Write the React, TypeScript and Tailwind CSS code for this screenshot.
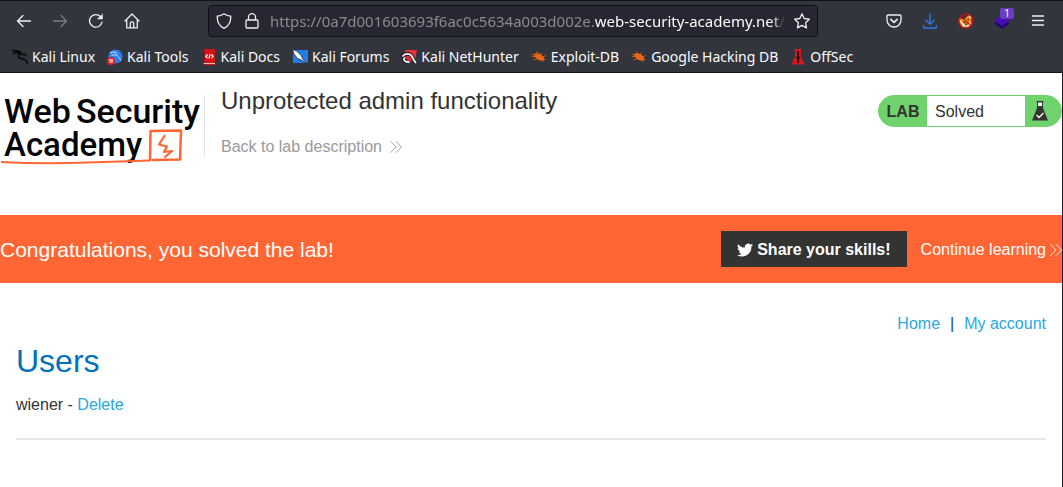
import type { ReactNode } from "react";

function ToolButton({ label, dim, children }: { label: string; dim?: boolean; children: ReactNode }) {
  return (
    <button
      type="button"
      aria-label={label}
      className={"relative flex h-8 w-9 items-center justify-center " + (dim ? "text-[#7b7c81]" : "text-[#f0f0f2]")}
    >
      {children}
    </button>
  );
}

function Line({ children, size = 16 }: { children: ReactNode; size?: number }) {
  return (
    <svg width={size} height={size} viewBox="0 0 16 16" fill="none" stroke="currentColor" strokeWidth="1.3" strokeLinecap="round" strokeLinejoin="round" className="shrink-0">
      {children}
    </svg>
  );
}

function Chevrons() {
  return (
    <svg width="12" height="12" viewBox="0 0 12 12" fill="none" stroke="currentColor" strokeWidth="0.9" className="shrink-0">
      <path d="M.5.3 6 6 .5 11.7M6 .3 11.5 6 6 11.7" />
    </svg>
  );
}

function Beetle() {
  return (
    <svg width="16" height="16" viewBox="0 0 16 16" className="shrink-0">
      <path d="M3 5C6 3.200 10 4.400 12.500 8c1.500 2.600 0 4.200-3 3.600C6.500 11.200 3.500 8.600 3 5Z" fill="#ee6414" />
      <path d="M1 7.500h4M2.500 11l4-1.500M5.500 2.500 7 5M10 3.500V6M15 6.500 11.500 8M14.500 10.500h-3M12.500 13 11 11M0.500 5 3.500 6" stroke="#ee6414" strokeWidth="0.8" />
    </svg>
  );
}

const bookmarks: { name: string; icon: ReactNode }[] = [
  {
    name: "Kali Linux",
    icon: (
      <svg width="16" height="16" viewBox="0 0 16 16" className="shrink-0">
        <path d="M0 1.500C4 1.300 7.500 2 9.500 4M1 4.500C4 3 7 3.400 9 4.600M9 3.500C5 5.500 5.500 9 9 9.500c3.500.5 6 1.500 6.500 5.500M8.500 5.500 13 5.200l1.500 1.600" fill="none" stroke="#050505" strokeWidth="1.500" />
      </svg>
    ),
  },
  {
    name: "Kali Tools",
    icon: (
      <svg width="16" height="16" viewBox="0 0 16 16" className="shrink-0">
        <circle cx="8.500" cy="7.500" r="7" fill="#2a7cf0" />
        <path d="M3 4c3-1.500 6-1 7.500 1M4.500 6.500c3-1.500 5-.5 6.500 1s2 2 2.500 4" fill="none" stroke="#dbeaff" strokeWidth="1" />
        <circle cx="4" cy="12" r="4" fill="#e02424" />
        <path d="M2 10.800h4M3.200 11v3M5 11v3" stroke="#fff" strokeWidth="0.900" />
      </svg>
    ),
  },
  {
    name: "Kali Docs",
    icon: (
      <svg width="16" height="16" viewBox="0 0 16 16" className="shrink-0">
        <rect x="2" y="0" width="12" height="16" fill="#d51317" />
        <rect x="2" y="0" width="1.500" height="16" fill="#78141e" />
        <path d="M2.500 14.500H14" stroke="#e9bcbc" />
        <path d="M6.500 5.500 4.800 7.300l1.700 1.700M10.500 5.500l1.700 1.800L10.500 9M9 5 8 9.500" fill="none" stroke="#fff" strokeWidth="1.200" />
      </svg>
    ),
  },
  {
    name: "Kali Forums",
    icon: (
      <svg width="16" height="16" viewBox="0 0 16 16" className="shrink-0">
        <path d="M1 1h15v13H1Z" fill="#217ee8" />
        <path d="m.5.500 4 1.500 4.500 4 1.500 3.500L15.500 15l-6-4-4-1.500L2 5Z" fill="#f7f7f7" stroke="#121a28" strokeWidth="0.700" />
      </svg>
    ),
  },
  {
    name: "Kali NetHunter",
    icon: (
      <svg width="16" height="16" viewBox="0 0 16 16" className="shrink-0">
        <path d="M4 1h12l-2 11H6Z" fill="#e3303a" />
        <path d="M1 7.500C4 3.500 9 4 11 7.500c1 2 2 4.500 4 6.500M6.500 13C2.500 13 1.500 9.500 4.500 8.500" fill="none" stroke="#16161a" strokeWidth="3.500" />
        <path d="M1.500 7.500C4 3.800 9 4 11 7.500c1 2 2 4.500 4 6.500M8.500 13C2.500 13.500 1.500 9.500 4.500 8.500" fill="none" stroke="#f2f2f2" strokeWidth="1.800" />
      </svg>
    ),
  },
  { name: "Exploit-DB", icon: <Beetle /> },
  { name: "Google Hacking DB", icon: <Beetle /> },
  {
    name: "OffSec",
    icon: (
      <svg width="16" height="16" viewBox="0 0 16 16" className="shrink-0">
        <path d="M5 0h6v8l3.500 7.500h-13L5 8Z" fill="#d8161f" />
        <path d="M7 2h2v5l1 2-1 1v4H7v-4L6 9l1-2Z" fill="#2a070b" />
      </svg>
    ),
  },
];

function Browser() {
  return (
    <header className="border-t border-b border-[#121316] bg-[#33353d] font-['Noto_Sans',sans-serif]">
      <div className="flex items-center pt-1 pr-[7px] pl-1.5 text-[15px]">
        <ToolButton label="Back">
          <Line><path d="M14.500 8H1.500M7 2.500 1.500 8 7 13.500" /></Line>
        </ToolButton>
        <ToolButton label="Forward" dim>
          <Line><path d="M1.500 8h13M9 2.500 14.500 8 9 13.500" /></Line>
        </ToolButton>
        <ToolButton label="Reload">
          <Line>
            <path d="M14 9.200A6.300 6.300 0 1 1 12.500 3.600" />
            <path d="M14.500 1.200V6H9.700Z" fill="currentColor" strokeWidth="0.500" />
          </Line>
        </ToolButton>
        <ToolButton label="Home">
          <Line><path d="M1 8 8 1l7 7M2.700 6.800V14.800h10.600V6.800M6.300 14.500v-4a1.700 1.700 0 0 1 3.400 0v4" /></Line>
        </ToolButton>
        <div className="ml-[58px] flex h-8 min-w-0 flex-1 items-center rounded border border-[#0f1014] bg-[#262733] px-[7px] text-[#f0f0f2]">
          <Line><path d="M8 .7C10.200 2.300 12.300 3 14.700 3.200 15 8.500 12.700 13 8 15.300 3.300 13 1 8.500 1.300 3.200 3.700 3 5.800 2.300 8 .7Z" /></Line>
          <span className="w-3 shrink-0" />
          <Line><path d="M3 7h10a1 1 0 0 1 1 1v6a1 1 0 0 1-1 1H3a1 1 0 0 1-1-1V8a1 1 0 0 1 1-1ZM4.500 7V4.200a3.500 3.500 0 0 1 7 0V7" /></Line>
          <div className="ml-2.5 min-w-0 flex-1 overflow-hidden mask-r-from-96% whitespace-nowrap text-[#8a8b91]">
            https://0a7d001603693f6ac0c5634a003d002e.<span className="text-[#fbfbfe]">web-security-academy.net</span>/
          </div>
          <button type="button" aria-label="Bookmark this page" className="ml-1">
            <Line><path d="m8 .8 2.200 4.700 5.100.7-3.700 3.600.9 5.100L8 12.400l-4.500 2.500.9-5.100L.7 6.200l5.100-.7Z" /></Line>
          </button>
        </div>
        <div className="ml-[58px] flex">
          <ToolButton label="Pocket">
            <Line>
              <path d="M2 2h12a1 1 0 0 1 1 1v4a7 7 0 0 1-14 0V3a1 1 0 0 1 1-1Z" />
              <path d="m4.800 6.300 3.200 3 3.200-3" strokeWidth="1.600" />
            </Line>
          </ToolButton>
          <ToolButton label="Downloads">
            <svg width="16" height="16" viewBox="0 0 16 16" fill="none" stroke="#2f78ec" strokeWidth="1.400" strokeLinecap="round" strokeLinejoin="round">
              <path d="M8 .7v10.200M4 7.200l4 4 4-4M1.500 12.800v1a1.200 1.200 0 0 0 1.200 1.200h10.600a1.200 1.200 0 0 0 1.200-1.200v-1" />
            </svg>
          </ToolButton>
          <ToolButton label="FoxyProxy">
            <svg width="16" height="16" viewBox="0 0 18 18">
              <path d="m1 6 6 1 4-4 3-1 1 3v7l-4 4-6 1-4-5Z" fill="#ee861b" />
              <path d="m1 7 2 4 3 5 3-1-3-4ZM12 2l1 4 3-1ZM9 14l4-2 2-3-1 5-4 2Z" fill="#f8e3c8" />
              <path d="m6 10 2 1M11 8l1-1M8.500 13l2-1" stroke="#3a1d0d" strokeWidth="1.300" />
              <circle cx="9" cy="9" r="8" fill="none" stroke="#c90f15" strokeWidth="1.400" />
              <path d="m3.500 3.500 11 11" stroke="#c90f15" strokeWidth="1.400" />
            </svg>
          </ToolButton>
          <ToolButton label="Wappalyzer">
            <svg width="16" height="16" viewBox="0 0 16 16">
              <path d="m0 10.500 8-4 8 4L8 16Z" fill="#20076b" />
              <path d="m0 7 8-5 8 5-8 6Z" fill="#4a0bb4" />
            </svg>
            <span className="absolute top-[3px] left-4 flex h-[11px] w-3.5 items-center justify-center rounded-xs bg-[#6b3cc4] text-[10px] text-white">1</span>
          </ToolButton>
          <ToolButton label="Menu">
            <Line><path d="M2.500 3h11M2.500 7.500h11M2.500 12h11" /></Line>
          </ToolButton>
        </div>
      </div>
      <nav aria-label="Bookmarks" className="flex h-[35px] items-center gap-3 pt-1 pl-3 text-sm whitespace-nowrap text-[#fbfbfe]">
        {bookmarks.map((b) => (
          <a key={b.name} href="#" className="flex items-center gap-1">
            {b.icon}
            {b.name}
          </a>
        ))}
      </nav>
    </header>
  );
}

function Logo() {
  return (
    <svg role="img" aria-label="Web Security Academy" width="204" height="84" viewBox="0 -8 204 84" className="shrink-0">
      <g fill="#050505" fontFamily="Roboto, sans-serif" fontWeight="500">
        <text x="4" y="28" fontSize="34">Web</text>
        <text x="200" y="28" fontSize="34" textAnchor="end">Security</text>
        <text x="4" y="61" fontSize="33">Academy</text>
      </g>
      <g fill="none" stroke="#ff6633" strokeLinejoin="round">
        <path d="M1 67C30 68.500 60 68.500 88 67.500L150 65.500" strokeWidth="2" />
        <path d="M150 66 150.500 36 181 35.500 180 64.500 152 65" strokeWidth="2.500" />
        <path d="m165 40-6 9.500 8 2-3 5.500 8-1-7.500 6.500" strokeWidth="2.200" />
      </g>
    </svg>
  );
}

export default function App() {
  return (
    <div className="flex min-h-screen flex-col bg-white font-['Liberation_Sans',sans-serif] text-base text-[#333332]">
      <Browser />
      <main className="flex-1 border-r border-[#1c1b29]">
        <section className="flex h-[142px] items-start pt-3.5">
          <Logo />
          <div className="mt-2 flex h-[62px] flex-col justify-between border-l border-[#e2e2e2] pl-4">
            <h1 className="-mt-2 text-2xl leading-7">Unprotected admin functionality</h1>
            <a href="#" className="flex items-center gap-2 leading-5 text-[#999999]">
              Back to lab description
              <Chevrons />
            </a>
          </div>
          <div className="mt-2 ml-auto flex h-8 items-stretch overflow-hidden rounded-full border border-[#70d26c] bg-[#70d26c] leading-8">
            <strong className="w-12 text-center">LAB</strong>
            <span className="w-[98px] bg-white pl-2">Solved</span>
            <span className="flex w-9 items-center pl-1.5">
              <svg width="18" height="22" viewBox="0 0 18 22">
                <path d="M6 2h6v6l5 12.500H1L6 8Z" fill="#333332" />
                <path d="M7 2.500h4V6H7Z" fill="#f7fff7" />
                <path d="M5.500 1.500h7" stroke="#333332" strokeWidth="1" />
                <path d="m5.500 15 2.500 2.500 4.500-4.500" stroke="#fff" strokeWidth="1.300" fill="none" />
              </svg>
            </span>
          </div>
        </section>

        <section className="flex h-[68px] items-center bg-[#ff6633] text-white">
          <p className="pt-0.5 text-[21px]">Congratulations, you solved the lab!</p>
          <button type="button" className="ml-auto flex h-9 items-center gap-1 bg-[#333332] px-4 pt-0.5 font-bold">
            <svg width="16" height="16" viewBox="0 0 24 24" fill="currentColor">
              <path d="M24 4.600a10 10 0 0 1-2.800.8 5 5 0 0 0 2.200-2.700 10 10 0 0 1-3.100 1.200 4.900 4.900 0 0 0-8.400 4.500A14 14 0 0 1 1.700 3.200 4.900 4.900 0 0 0 3.200 9.700 5 5 0 0 1 1 9.100 4.900 4.900 0 0 0 4.900 14a5 5 0 0 1-2.200.1 4.900 4.900 0 0 0 4.600 3.400A10 10 0 0 1 0 19.500 14 14 0 0 0 21.500 7.100 10 10 0 0 0 24 4.600Z" />
            </svg>
            Share your skills!
          </button>
          <a href="#" className="ml-3.5 flex items-center gap-1 pt-0.5">
            Continue learning
            <Chevrons />
          </a>
        </section>

        <section className="px-4 pt-[29px] pb-8">
          <nav aria-label="Account" className="flex justify-end gap-2.5 leading-6">
            <a href="#" className="text-[#29a8e0]">Home</a>
            <span className="text-[#0b4f80]">|</span>
            <a href="#" className="text-[#29a8e0]">My account</a>
          </nav>
          <h2 className="mt-[5px] text-[32px] leading-10 text-[#0071bc]">Users</h2>
          <p className="mt-3 leading-6">
            wiener - <a href="#" className="text-[#29a8e0]">Delete</a>
          </p>
          <hr className="mt-[21px] border-t-2 border-[#e5e5e5]" />
        </section>
      </main>
    </div>
  );
}
